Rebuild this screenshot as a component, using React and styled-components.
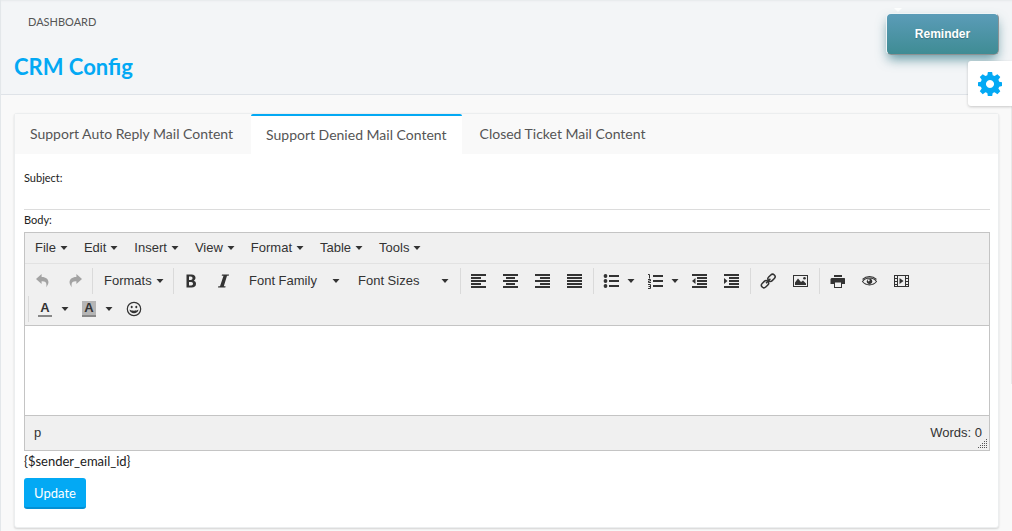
import React from "react";
import styled, { createGlobalStyle, css } from "styled-components";

const Global = createGlobalStyle`
  *, *::before, *::after { box-sizing: border-box; }
  body {
    margin: 0;
    background: #f9f9f9;
    color: #212121;
    font-family: Lato, sans-serif;
    font-size: 13px;
    overflow: hidden;
  }
  button, input, textarea { font: inherit; color: inherit; }
`;

const accent = "#03a9f4";

const Page = styled.div`
  position: relative;
  min-height: 100vh;
  border-left: 1px solid #e3e7ea;
`;

const Header = styled.header`
  height: 95px;
  padding: 14px 14px 0 13px;
  background: #f3f5f7;
  border-bottom: 1px solid #dfe3e8;
  box-shadow: inset 0 2px 2px -1px #e6e8eb;
`;

const Crumb = styled.a`
  display: block;
  width: max-content;
  margin-left: 14px;
  font-size: 11px;
  line-height: 16px;
  color: #555;
  text-decoration: none;
`;

const Title = styled.h1`
  margin: 22px 0 0;
  font-size: 22px;
  line-height: 30px;
  font-weight: 700;
  color: ${accent};
`;

const Reminder = styled.button`
  position: absolute;
  top: 13px;
  right: 13px;
  width: 113px;
  height: 42px;
  padding: 0;
  border: 1px solid;
  border-color: #eef4f6 #8b9294 #8b9294 #eef4f6;
  border-radius: 5px;
  background: linear-gradient(#5b9cb8, #3f8c94);
  box-shadow: 0 6px 12px -2px rgba(50, 120, 135, 0.75);
  color: #fff;
  font: 700 12px/20px "Liberation Sans", sans-serif;
  text-shadow: 0 1px 1px #38717c;
`;

const Pointer = styled.span`
  position: absolute;
  top: 8px;
  right: 110px;
  border: 4px solid transparent;
  border-top-color: #fff;
`;

const Settings = styled.button`
  position: absolute;
  top: 61px;
  right: 0;
  width: 44px;
  height: 45px;
  padding: 0;
  display: flex;
  align-items: center;
  justify-content: center;
  border: 0;
  border-radius: 3px 0 0 3px;
  background: #fff;
  box-shadow: 0 1px 3px rgba(0, 0, 0, 0.2);
  color: ${accent};
`;

const DrawerEdge = styled.span`
  position: absolute;
  top: 106px;
  right: 0;
  width: 1px;
  height: 278px;
  background: #e9e9e9;
`;

const Card = styled.main`
  margin: 18px 13px 4px;
  border: 1px solid #eceeef;
  border-radius: 3px;
  background: #fff;
  box-shadow: 0 1px 2px rgba(0, 0, 0, 0.15);
`;

const Tabs = styled.div`
  display: flex;
  gap: 3px;
  height: 40px;
  background: #f9f9f9;
`;

const Tab = styled.button`
  padding: 0 15px;
  border: 0;
  background: transparent;
  color: #555;
  font-size: 14px;
  line-height: 20px;
  white-space: nowrap;
  ${(p) => p.$active && css`
    background: #fff;
    border-top: 2px solid ${accent};
    border-radius: 2px 2px 0 0;
  `}
`;

const Form = styled.form`
  display: flex;
  flex-direction: column;
  align-items: stretch;
  padding: 16px 8px 18px 9px;
`;

const Label = styled.label`
  font-size: 11px;
  line-height: 16px;
`;

const Subject = styled.input`
  width: 100%;
  height: 24px;
  margin-bottom: 2px;
  padding: 0;
  border: 0;
  border-bottom: 1px solid #dcdcdc;
  outline: 0;
  background: transparent;
`;

const Editor = styled.div`
  margin-top: 4px;
  border: 1px solid #c4c4c4;
  background: #f0f0f0;
  color: #333;
  font-family: "Liberation Sans", sans-serif;
  font-size: 13px;
  line-height: 20px;
`;

const MenuBar = styled.div`
  display: flex;
  height: 31px;
  padding-left: 2px;
  border-bottom: 1px solid #e2e2e2;
`;

const TextButton = styled.button`
  display: flex;
  align-items: center;
  justify-content: space-between;
  gap: 4px;
  width: ${(p) => (p.$width ? `${p.$width}px` : "auto")};
  height: ${(p) => (p.$width ? "28px" : "30px")};
  padding: ${(p) => (p.$width ? "0 8px 0 10px" : "0 8px")};
  border: 0;
  background: transparent;
  white-space: nowrap;
`;

const Toolbar = styled.div`
  display: flex;
  flex-wrap: wrap;
  padding: 3px 3px 2px;
  border-bottom: 1px solid #c4c4c4;
`;

const Group = styled.div`
  position: relative;
  display: flex;
  height: 28px;
  padding: 0 3px 0 2px;
  &::before {
    content: "";
    position: absolute;
    left: 0;
    top: 1px;
    bottom: 1px;
    border-left: 1px solid #dadada;
  }
  &:first-child { padding: 0; }
  &:first-child::before { display: none; }
`;

const IconButton = styled.button`
  display: flex;
  align-items: center;
  justify-content: center;
  width: 32px;
  height: 28px;
  padding: 0;
  border: 0;
  background: transparent;
  opacity: ${(p) => (p.disabled ? 0.4 : 1)};
`;

const SplitButton = styled(IconButton)`
  width: 44px;
  justify-content: flex-start;
  gap: 8px;
  padding-left: 8px;
`;

const Body = styled.textarea`
  display: block;
  width: 100%;
  height: 89px;
  padding: 8px;
  border: 0;
  outline: 0;
  resize: none;
  background: #fff;
`;

const StatusBar = styled.div`
  position: relative;
  display: flex;
  justify-content: space-between;
  align-items: center;
  height: 35px;
  padding: 0 7px 0 9px;
  border-top: 1px solid #c4c4c4;
`;

const Grip = styled.svg`
  position: absolute;
  right: 2px;
  bottom: 2px;
`;

const Token = styled.p`
  margin: 0;
  font-size: 13px;
  line-height: 20px;
`;

const Update = styled.button`
  align-self: flex-start;
  width: 62px;
  height: 31px;
  margin-top: 7px;
  padding: 0;
  border: 0;
  border-bottom: 2px solid #0390d4;
  border-radius: 3px;
  background: ${accent};
  color: #fff;
  font-size: 13px;
`;

const CaretMark = styled.svg`
  flex: none;
`;

const Caret = () => (
  <CaretMark width="8" height="4" viewBox="0 0 8 4" fill="#333" aria-hidden="true">
    <path d="M.5 0h7L4 4z" />
  </CaretMark>
);

const Bars = ({ rows }) => (
  <g shapeRendering="crispEdges">
    {rows.map(([x, w, y], i) => (
      <rect key={i} x={x} y={y} width={w} height="2" />
    ))}
  </g>
);

const lines = (mid) => [
  [1, 15, 1],
  [mid[0], mid[1], 4],
  [1, 15, 7],
  [mid[0], mid[1], 10],
  [1, 15, 13],
];
const indentLines = [[1, 15, 1], [6, 10, 4], [6, 10, 7], [6, 10, 10], [1, 15, 13]];
const listLines = [[6, 10, 2], [6, 10, 7], [6, 10, 12]];

const drawings = {
  undo: <path d="M5.600 1 0 6l5.600 5V8.200c3.800-.2 5.600 1.200 4.600 6C14.500 9.500 12.500 3.800 5.600 3.900z" />,
  redo: <path d="M8.400 1 14 6l-5.600 5V8.200c-3.800-.2-5.600 1.200-4.600 6C-.5 9.500 1.500 3.800 8.400 3.900z" />,
  bold: <path fillRule="evenodd" d="M3.500 1.500h5c2.700 0 4 1.300 4 3.300 0 1.400-.7 2.400-1.800 2.900 1.500.4 2.300 1.500 2.300 3.100 0 2.500-1.600 3.700-4.300 3.700H3.500zM6 3.500V7h1.800c2.300 0 2.300-3.500 0-3.500zM6 9v3.500h2.200c2.400 0 2.400-3.500 0-3.500z" />,
  italic: <path d="M7 1.500h7l-.3 1.200h-1.700L8.800 13.300h1.800L10.300 14.500H3l.3-1.200H5L8.500 2.700H6.700z" />,
  left: <Bars rows={lines([1, 10])} />,
  center: <Bars rows={lines([4, 9])} />,
  right: <Bars rows={lines([6, 10])} />,
  justify: <Bars rows={lines([1, 15])} />,
  bullets: (
    <>
      <Bars rows={listLines} />
      <circle cx="2.500" cy="3" r="1.900" />
      <circle cx="2.500" cy="8" r="1.900" />
      <circle cx="2.500" cy="13" r="1.900" />
    </>
  ),
  numbers: (
    <>
      <Bars rows={listLines} />
      <path fill="none" stroke="currentColor" d="M1 1.500h1.500v4M1 6.500h2.500v1.500H1.500v1.500h2.500M1 11.500h2.500v4H1M1.500 13.500h2" />
    </>
  ),
  outdent: <><Bars rows={indentLines} /><path d="M4.500 5v6L1 8z" /></>,
  indent: <><Bars rows={indentLines} /><path d="M1 5v6l3.500-3z" /></>,
  link: (
    <g fill="none" stroke="currentColor" strokeWidth="1.500">
      <rect x="7.500" y="2.300" width="8" height="5" rx="2.500" transform="rotate(-45 11.500 4.800)" />
      <rect x="1" y="8.700" width="8" height="5" rx="2.500" transform="rotate(-45 5 11.200)" />
      <path d="M6 10.200l4.400-4.400" />
    </g>
  ),
  image: (
    <>
      <path fillRule="evenodd" d="M1 2h15v12H1zm1 1v10h13V3z" />
      <path d="M3 12V9.500l3-4 3 3.500 2-1.500 3 3V12z" />
      <circle cx="12.500" cy="5.200" r="1.300" />
    </>
  ),
  print: (
    <>
      <path d="M5 2h8v2H5zM2.500 5h13l1 1v5H13V9H5v2H1.500V6z" />
      <path fillRule="evenodd" d="M5 8.500h8V15H5zM6 9.500V14h6V9.500z" />
    </>
  ),
  preview: (
    <>
      <path fill="none" stroke="currentColor" strokeWidth="1.100" d="M1.500 8.500C5 3.800 12 3.800 15.500 8.500 12 13 5 13 1.500 8.500zM1.500 6.300C5.500 2.500 11.500 2.500 15.500 6.300" />
      <path fillRule="evenodd" d="M8.500 5.500a2.800 2.800 0 1 0 .01 0zM7.700 6.200a1 1 0 1 1-.01 0z" />
    </>
  ),
  media: (
    <>
      <path fillRule="evenodd" d="M1 2h15v12H1zm1 1v2h2V3zm0 3v2h2V6zm0 3v2h2V9zm0 3v1h2v-1zM5 3v10h7V3zm8 0v2h2V3zm0 3v2h2V6zm0 3v2h2V9zm0 3v1h2v-1z" />
      <path d="M6.500 5v6l4-3z" />
    </>
  ),
  smile: (
    <>
      <circle cx="8" cy="8" r="6.700" fill="none" stroke="currentColor" strokeWidth="1.200" />
      <ellipse cx="5.700" cy="6" rx="1" ry="1.300" />
      <ellipse cx="10.300" cy="6" rx="1" ry="1.300" />
      <path d="M3.500 8.500c2 1.600 7 1.600 9 0-.5 5-8.500 5-9 0z" />
    </>
  ),
};

const Icon = ({ name }) => (
  <svg width="16" height="16" viewBox="0 0 16 16" fill="currentColor" aria-hidden="true">
    {drawings[name]}
  </svg>
);

const ColorLetter = styled.span`
  width: 14px;
  height: 16px;
  margin-right: 1px;
  border-bottom: 2px solid #888;
  background: ${(p) => (p.$filled ? "#b5b5b5" : "transparent")};
  font-size: 13px;
  line-height: 14px;
  font-weight: 700;
  text-align: center;
`;

const Tool = ({ name, label, disabled }) => (
  <IconButton type="button" aria-label={label} disabled={disabled}>
    <Icon name={name} />
  </IconButton>
);

const Split = ({ label, children }) => (
  <SplitButton type="button" aria-label={label}>
    {children}
    <Caret />
  </SplitButton>
);

const Gear = () => (
  <svg width="24" height="24" viewBox="0 0 24 24" fill="currentColor" aria-hidden="true">
    <path
      fillRule="evenodd"
      d="M9.900 0h4.200l.6 3.300 1.900.8 2.800-1.900 2.900 2.900-1.900 2.700.8 1.900 2.800.6v3.800l-2.800.6-.8 1.900 1.900 2.700-2.900 2.900-2.800-1.900-1.900.8-.6 3.300H9.900l-.6-3.300-1.900-.8-2.700 1.900-2.900-2.900 1.900-2.700-.8-1.900L0 14.100v-3.800l2.900-.6.800-1.900-1.900-2.700 2.900-2.900 2.700 1.900 1.900-.8zM12 8.100a4 4 0 1 0 .01 0z"
    />
  </svg>
);

const menus = ["File", "Edit", "Insert", "View", "Format", "Table", "Tools"];
const tabs = ["Support Auto Reply Mail Content", "Support Denied Mail Content", "Closed Ticket Mail Content"];

export default function App() {
  return (
    <Page>
      <Global />
      <Header>
        <Crumb href="#dashboard">DASHBOARD</Crumb>
        <Title>CRM Config</Title>
      </Header>
      <Card>
        <Tabs role="tablist">
          {tabs.map((t, i) => (
            <Tab key={t} role="tab" type="button" aria-selected={i === 1} $active={i === 1}>{t}</Tab>
          ))}
        </Tabs>
        <Form onSubmit={(e) => e.preventDefault()}>
          <Label htmlFor="subject">Subject:</Label>
          <Subject id="subject" type="text" />
          <Label htmlFor="body">Body:</Label>
          <Editor>
            <MenuBar>
              {menus.map((m) => (
                <TextButton key={m} type="button">{m}<Caret /></TextButton>
              ))}
            </MenuBar>
            <Toolbar>
              <Group>
                <Tool name="undo" label="Undo" disabled />
                <Tool name="redo" label="Redo" disabled />
              </Group>
              <Group>
                <TextButton type="button" $width={76}>Formats<Caret /></TextButton>
              </Group>
              <Group>
                <Tool name="bold" label="Bold" />
                <Tool name="italic" label="Italic" />
                <TextButton type="button" $width={109}>Font Family<Caret /></TextButton>
                <TextButton type="button" $width={109}>Font Sizes<Caret /></TextButton>
              </Group>
              <Group>
                <Tool name="left" label="Align left" />
                <Tool name="center" label="Align center" />
                <Tool name="right" label="Align right" />
                <Tool name="justify" label="Justify" />
              </Group>
              <Group>
                <Split label="Bullet list"><Icon name="bullets" /></Split>
                <Split label="Numbered list"><Icon name="numbers" /></Split>
                <Tool name="outdent" label="Decrease indent" />
                <Tool name="indent" label="Increase indent" />
              </Group>
              <Group>
                <Tool name="link" label="Insert link" />
                <Tool name="image" label="Insert image" />
              </Group>
              <Group>
                <Tool name="print" label="Print" />
                <Tool name="preview" label="Preview" />
                <Tool name="media" label="Insert video" />
              </Group>
              <Group>
                <Split label="Text color"><ColorLetter>A</ColorLetter></Split>
                <Split label="Background color"><ColorLetter $filled>A</ColorLetter></Split>
                <Tool name="smile" label="Emoticons" />
              </Group>
            </Toolbar>
            <Body id="body" />
            <StatusBar>
              <span>p</span>
              <span>Words: 0</span>
              <Grip width="9" height="9" viewBox="0 0 9 9" fill="#555" shapeRendering="crispEdges" aria-hidden="true">
                <path d="M8 0h1v1H8zM6 2h1v1H6zM8 2h1v1H8zM4 4h1v1H4zM6 4h1v1H6zM8 4h1v1H8zM2 6h1v1H2zM4 6h1v1H4zM6 6h1v1H6zM8 6h1v1H8zM0 8h1v1H0zM2 8h1v1H2zM4 8h1v1H4zM6 8h1v1H6zM8 8h1v1H8z" />
              </Grip>
            </StatusBar>
          </Editor>
          <Token>{"{$sender_email_id}"}</Token>
          <Update type="submit">Update</Update>
        </Form>
      </Card>
      <DrawerEdge />
      <Pointer />
      <Reminder type="button">Reminder</Reminder>
      <Settings type="button" aria-label="Settings"><Gear /></Settings>
    </Page>
  );
}
